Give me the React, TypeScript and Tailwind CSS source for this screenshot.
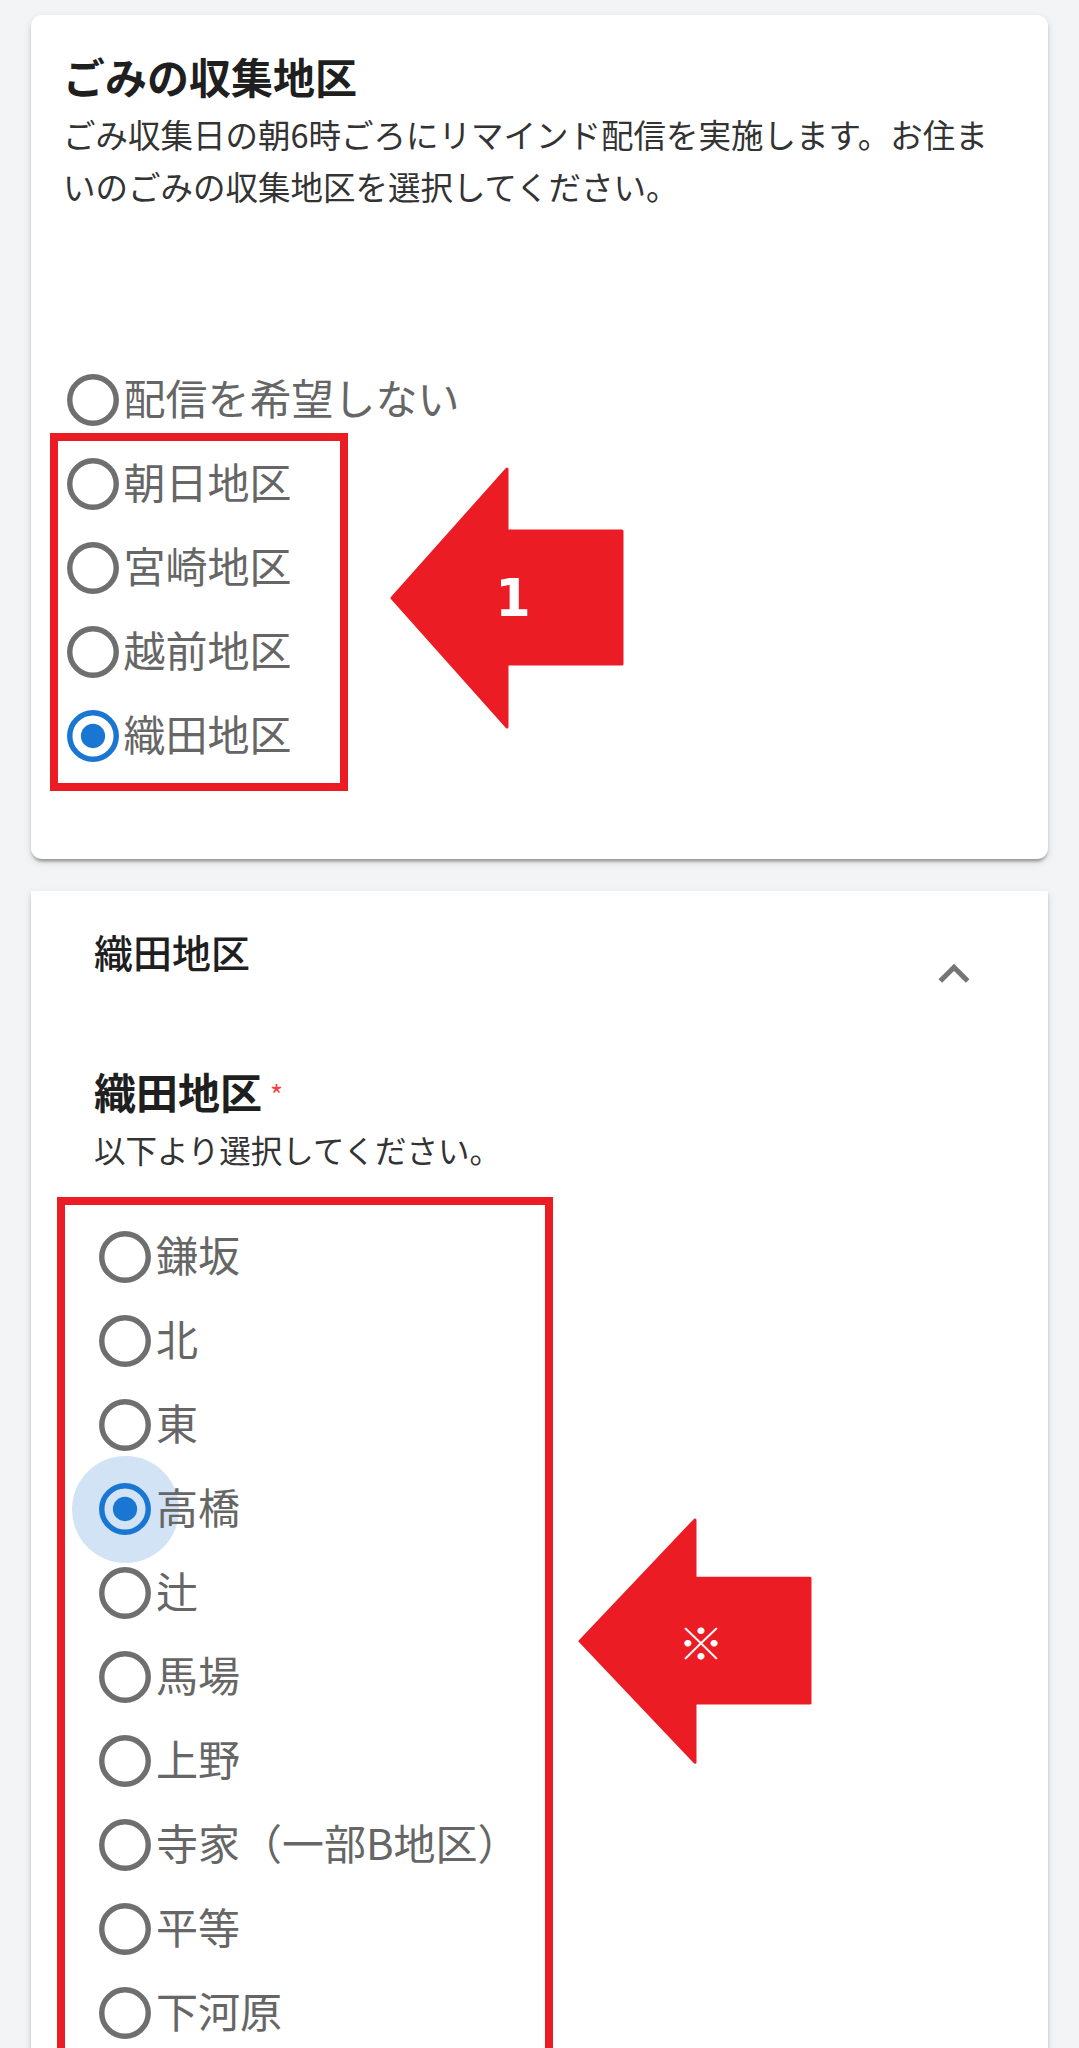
import React from 'react';

const DISTRICTS = ['配信を希望しない', '朝日地区', '宮崎地区', '越前地区', '織田地区'];
const ODA_AREAS = ['鎌坂', '北', '東', '高橋', '辻', '馬場', '上野', '寺家（一部B地区）', '平等', '下河原'];

function RadioIcon({ checked, ripple }: { checked: boolean; ripple?: boolean }) {
  return (
    <span className="relative w-[62px] h-[62px] flex-shrink-0">
      {ripple && (
        <span className="absolute left-[-22.5px] top-[-22.5px] w-[107px] h-[107px] rounded-full bg-[#d1e3f5]" />
      )}
      <svg viewBox="0 0 24 24" className="relative w-[62px] h-[62px]">
        <circle cx="12" cy="12" r="9" fill="none" stroke={checked ? '#1976d2' : '#6f6f6f'} strokeWidth="2.1" />
        {checked && <circle cx="12" cy="12" r="4.7" fill="#1976d2" />}
      </svg>
    </span>
  );
}

function RadioRow({ label, checked, ripple }: { label: string; checked?: boolean; ripple?: boolean }) {
  return (
    <div className="flex items-center h-[84px]">
      <RadioIcon checked={!!checked} ripple={ripple} />
      <span className="relative text-[42px] leading-[1.2] text-[#666666] -mt-[6px]">{label}</span>
    </div>
  );
}

function LeftArrow({ label, labelClass }: { label: string; labelClass: string }) {
  return (
    <div className="relative w-[234px] h-[262px] flex items-center justify-center pl-[12px]">
      <svg viewBox="0 0 234 262" className="absolute inset-0 w-[234px] h-[262px]">
        <polygon
          points="2,131 117,2 117,64 232,64 232,197 117,197 117,260"
          fill="#ec1c24"
          stroke="#ec1c24"
          strokeWidth="3"
          strokeLinejoin="round"
        />
      </svg>
      <span className={`relative text-white ${labelClass}`}>{label}</span>
    </div>
  );
}

export default function App() {
  return (
    <div className="min-h-[2048px] bg-[#f3f4f6] px-[31px] pt-[15px] pb-[40px] font-['Noto_Sans_CJK_JP','Noto_Sans',sans-serif]">
      {/* ごみの収集地区 */}
      <div className="relative bg-white rounded-[11px] px-[32px] pt-[31px] pb-[81px] shadow-[0_5px_3px_-3px_rgba(0,0,0,0.2),0_3px_3px_0_rgba(0,0,0,0.14),0_3px_8px_0_rgba(0,0,0,0.12)]">
        <h2 className="text-[42px] leading-[60px] font-bold text-[#1f1f1f]">ごみの収集地区</h2>
        <p className="mt-[2px] max-w-[940px] text-[32.5px] leading-[52px] text-[#333333]">
          ごみ収集日の朝6時ごろにリマインド配信を実施します。お住まいのごみの収集地区を選択してください。
        </p>
        <div className="mt-[146px] -ml-[1.5px]">
          {DISTRICTS.map((d) => (
            <RadioRow key={d} label={d} checked={d === '織田地区'} />
          ))}
        </div>

        {/* annotation */}
        <div className="absolute left-[18.5px] top-[418px] w-[298px] h-[358px] border-[8px] border-[#ec1c24]" />
        <div className="absolute left-[359px] top-[452px]">
          <LeftArrow label="1" labelClass="font-['DejaVu_Sans',sans-serif] font-bold text-[51px] leading-none" />
        </div>
      </div>

      {/* 織田地区 accordion */}
      <div className="relative mt-[32px] bg-white shadow-[0_5px_3px_-3px_rgba(0,0,0,0.2),0_3px_3px_0_rgba(0,0,0,0.14),0_3px_8px_0_rgba(0,0,0,0.12)]">
        <div className="flex items-start justify-between px-[63px] pt-[32px]">
          <span className="text-[39px] leading-[56px] font-medium text-[#1f1f1f]">織田地区</span>
          <svg viewBox="0 0 24 24" className="w-[62px] h-[62px] mt-[20px]">
            <path d="m12 8-6 6 1.41 1.41L12 10.83l4.59 4.58L18 14z" fill="#757575" />
          </svg>
        </div>
        <div className="px-[63px] pb-[60px]">
          <div className="mt-[58px] flex items-center">
            <span className="text-[42px] leading-[56px] font-bold text-[#1f1f1f]">織田地区</span>
            <span className="ml-[8px] mt-[6px] text-[28px] leading-none text-[#f4433f]">*</span>
          </div>
          <p className="mt-[8px] text-[31.5px] leading-[44px] text-[#333333]">以下より選択してください。</p>
          <div className="mt-[44px]">
            {ODA_AREAS.map((a) => (
              <RadioRow key={a} label={a} checked={a === '高橋'} ripple={a === '高橋'} />
            ))}
          </div>
        </div>

        {/* annotation */}
        <div className="absolute left-[26px] top-[306px] w-[496px] h-[871px] border-[8px] border-[#ec1c24]" />
        <div className="absolute left-[547px] top-[627px] scale-y-[0.94] origin-top-left">
          <LeftArrow label="※" labelClass="text-[46px] leading-none" />
        </div>
      </div>
    </div>
  );
}
